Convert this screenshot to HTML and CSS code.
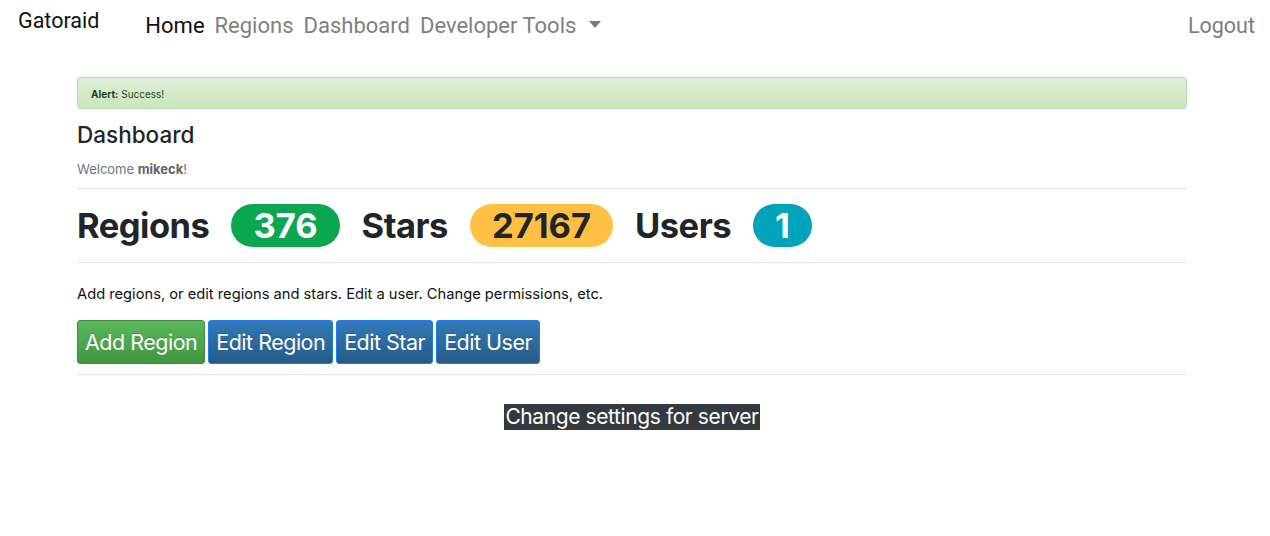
FILE: index.html
```html
<!DOCTYPE html>
<html>
<head>
<meta charset="utf-8">
<title>Gatoraid</title>
<link rel="stylesheet" href="styles.css">
</head>
<body>
<nav class="navbar">
  <a class="brand">Gatoraid</a>
  <ul class="nav-links">
    <li class="active">Home</li>
    <li>Regions</li>
    <li>Dashboard</li>
    <li class="dropdown">Developer Tools <span class="caret"></span></li>
  </ul>
  <a class="logout">Logout</a>
</nav>
<main class="container">
  <div class="alert"><strong>Alert:</strong> Success!</div>
  <h2 class="title">Dashboard</h2>
  <p class="welcome">Welcome <strong>mikeck</strong>!</p>
  <hr>
  <div class="stats">
    <span class="stat-label">Regions</span><span class="pill pill-green">376</span>
    <span class="stat-label">Stars</span><span class="pill pill-yellow">27167</span>
    <span class="stat-label">Users</span><span class="pill pill-teal">1</span>
  </div>
  <hr>
  <p class="desc">Add regions, or edit regions and stars. Edit a user. Change permissions, etc.</p>
  <div class="buttons">
    <button class="btn btn-success">Add Region</button>
    <button class="btn btn-primary">Edit Region</button>
    <button class="btn btn-primary">Edit Star</button>
    <button class="btn btn-primary">Edit User</button>
  </div>
  <hr>
  <div class="settings"><span class="settings-label">Change settings for server</span></div>
</main>
</body>
</html>
```
FILE: styles.css
```css
* { box-sizing: border-box; }
html, body { margin: 0; padding: 0; background: #fff; }
body { font-family: "Inter", "Helvetica Neue", Arial, sans-serif; color: #212529; }

.navbar {
  display: flex;
  align-items: flex-start;
  height: 60px;
  padding: 7px 15px 0 18px;
  font-family: "Roboto", "Helvetica Neue", Arial, sans-serif;
}
.brand { font-size: 21.5px; color: #111; line-height: 28px; }
.nav-links {
  display: flex;
  list-style: none;
  margin: 5px 0 0 46px;
  padding: 0;
  gap: 10px;
  font-size: 22px;
  line-height: 28px;
  color: #808080;
}
.nav-links .active { color: #111; }
.caret {
  display: inline-block;
  width: 0; height: 0;
  border-left: 6px solid transparent;
  border-right: 6px solid transparent;
  border-top: 7px solid #7b7b7b;
  vertical-align: middle;
  margin-left: 7px;
  position: relative; top: -3px;
}
.logout { margin-left: auto; font-size: 21.5px; line-height: 28px; margin-top: 5px; color: #7c7c7c; }

.container { width: 1110px; margin: 17px 0 0 77px; }
.alert {
  height: 32px;
  padding: 0 13px;
  font-size: 10px;
  line-height: 32px;
  color: #1f4a1f;
  background: linear-gradient(#dff0d8, #c8e5bc);
  border: 1px solid #b8deaa;
  border-radius: 3px;
}
.alert strong { color: #1b3d1b; }
.title { margin: 12px 0 0; font-size: 22.5px; font-weight: 500; line-height: 28px; color: #212529; }
.welcome { margin: 11px 0 0; font-size: 13px; line-height: 18px; color: #6c757d; }
.welcome strong { color: #5f6468; }
hr { border: 0; border-top: 1px solid #e3e3e3; margin: 10px 0 0; }

.stats { display: flex; align-items: center; height: 53px; margin-top: 10px; }
.stat-label { font-size: 34.5px; font-weight: 700; letter-spacing: -0.5px; color: #212529; margin-right: 22px; }
.pill {
  display: inline-block;
  height: 43px;
  line-height: 43px;
  padding: 0 22px;
  border-radius: 22px;
  font-size: 34.5px;
  font-weight: 700;
  margin-right: 22px;
}
.pill-green { background: #0ba652; color: #fff; }
.pill-yellow { background: #ffc045; color: #212529; }
.pill-teal { background: #00a3b8; color: #fff; }

.desc { margin: 22px 0 0; font-size: 14.7px; line-height: 18px; color: #111; }
.buttons { display: flex; gap: 3px; margin-top: 17px; margin-bottom: 10px; }
.btn {
  height: 44px;
  padding: 0 7px;
  font-family: "Inter", "Helvetica Neue", Arial, sans-serif;
  font-size: 21.5px;
  letter-spacing: -0.5px;
  color: #fff;
  border-radius: 3px;
  text-shadow: 0 -1px 0 rgba(0,0,0,0.2);
}
.btn-success { background: linear-gradient(#5cb85c, #419641); border: 1px solid #3e8f3e; }
.btn-primary { background: linear-gradient(#337ab7, #265a88); border: 1px solid #1a7cf0; }

.settings { text-align: center; margin-top: 29px; }
.settings-label {
  display: inline-block;
  background: #343a40;
  color: #fff;
  font-size: 21px;
  letter-spacing: -0.4px;
  line-height: 26px;
  padding: 0 1px;
}
```
